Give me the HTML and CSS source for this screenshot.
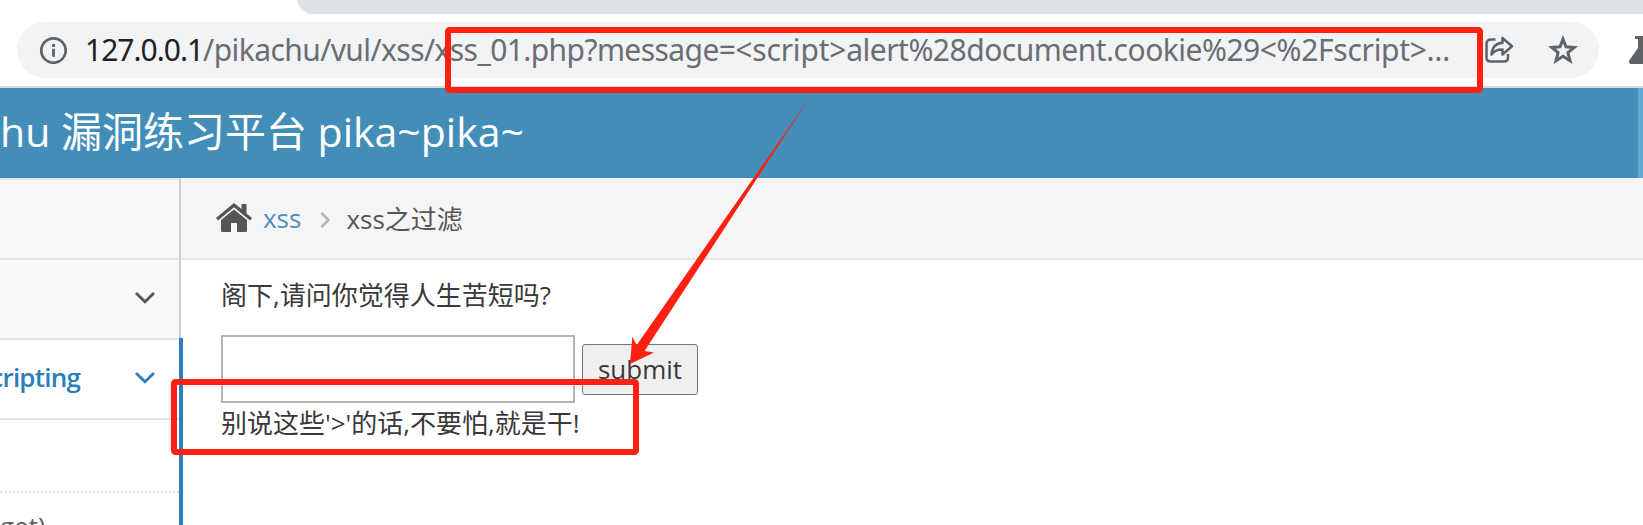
FILE: index.html
```html
<!DOCTYPE html>
<html lang="zh-CN">
<head>
<meta charset="utf-8">
<title>xss之过滤</title>
<link rel="stylesheet" href="styles.css">
</head>
<body>
<div class="window">
  <div class="tabstrip"><div class="tabstrip-bg"></div></div>
  <div class="toolbar">
    <div class="omnibox">
      <svg class="info-icon" width="28" height="28" viewBox="0 0 28 28"><circle cx="14.500" cy="14.500" r="12.200"/><path d="M14.500 12.800v7.900M14.500 8v3"/></svg>
      <div class="url"><span class="host">127.0.0.1</span><span class="path">/pikachu/vul/xss/xss_01.php?message=</span><span class="tag">&lt;script&gt;</span><span class="query">alert%28document.cookie%29</span><span class="tail">&lt;%2Fscript&gt;…</span></div>
      <svg class="share-icon" width="30" height="28" viewBox="0 0 30 28"><path d="M10.500 3.500H6.500Q1.500 3.500 1.500 8v13.500Q1.500 25.500 5.500 25.500h13.500Q23 25.500 23 21.500V18"/><path d="M17.500 2l9.500 8.200-9.500 8.300v-5Q10.500 13 6.500 18.500Q7.500 7.500 17.500 6.800z"/></svg>
      <svg class="star-icon" width="30" height="30" viewBox="0 0 30 30"><path d="M15 4.200l3 7.600 8.200.6-6.300 5.100 2.100 8.200-7-4.500-7 4.500 2.100-8.200-6.300-5.100 8.200-.6z"/></svg>
    </div>
    <svg class="flask-icon" width="14" height="28" viewBox="0 0 14 28"><path d="M6 0h8v28H3Q-1 28 .5 24L9 12V3H6z"/></svg>
  </div>
  <header class="navbar"><span class="brand">hu 漏洞练习平台 pika~pika~</span><div class="nav-edge"></div></header>
  <div class="main">
    <aside class="sidebar">
      <div class="item first"></div>
      <div class="item"><svg class="chevron" width="22" height="14" viewBox="0 0 22 14"><path d="M2 2l9 8.800L20 2"/></svg></div>
      <div class="open">
        <div class="item active"><span class="label">cripting</span><svg class="chevron" width="22" height="14" viewBox="0 0 22 14"><path d="M2 2l9 8.800L20 2"/></svg></div>
        <div class="sub"></div>
        <div class="sub sub-last"><span>get)</span></div>
      </div>
    </aside>
    <main class="content">
      <nav class="crumbs">
        <svg class="home-icon" width="36" height="30" viewBox="0 0 36 30"><path d="M18 0 25.500 6V1h5v9.500L36 15l-2 2.500L18 4.200 2 17.500 0 15z"/><path d="M18 6.500 31 17v10.500Q31 29 29.500 29H21v-9h-6v9H6.500Q5 29 5 27.500V17z"/></svg>
        <a class="crumb-link">xss</a>
        <svg class="sep" width="11" height="18" viewBox="0 0 11 18"><path d="M1.500 2l7 7-7 7"/></svg>
        <span class="crumb">xss之过滤</span>
      </nav>
      <div class="page">
        <p class="line question">阁下,请问你觉得人生苦短吗?</p>
        <div class="form"><input class="field" type="text"><button class="submit">submit</button></div>
        <p class="line answer">别说这些'&gt;'的话,不要怕,就是干!</p>
      </div>
    </main>
  </div>
  <svg class="marks" width="1643" height="525" viewBox="0 0 1643 525">
    <rect x="448" y="30" width="1032" height="60" rx="1.500"/>
    <rect x="174" y="382" width="462" height="70" rx="1.500"/>
    <path d="M809.500 98 644.500 351 654 352.500 630 364 632.300 336.700 636.700 345z"/>
  </svg>
</div>
</body>
</html>
```

FILE: styles.css
```css
* { box-sizing: border-box; }
body { margin: 0; background: #fff; font-family: "Open Sans", "Noto Sans CJK SC", sans-serif; color: #393939; }
.window { position: relative; width: 1643px; height: 525px; overflow: hidden; display: flex; flex-direction: column; }
.tabstrip { height: 14px; padding-left: 297px; flex: none; overflow: hidden; }
.tabstrip-bg { height: 18px; margin-top: -4px; background: #dee1e6; border-bottom-left-radius: 16px; }
.toolbar { height: 74px; flex: none; padding: 8px 0 8px 17px; border-bottom: 2px solid #d9dadc; display: flex; }
.omnibox { width: 1582px; height: 56px; border-radius: 28px; background: #f1f3f4; display: flex; align-items: center; padding: 0 21px 0 22px; }
.info-icon { fill: none; stroke: #5f6368; stroke-width: 2.8; flex: none; }
.url { width: 1400px; margin-left: 18px; font-family: "Noto Sans", sans-serif; font-size: 30px; line-height: 40px; white-space: nowrap; color: #6a6d71; }
.host { color: #1f2023; letter-spacing: -1px; }
.path { letter-spacing: -.58px; }
.tag { letter-spacing: -.2px; }
.query { letter-spacing: -.5px; }
.tail { letter-spacing: -.3px; }
.share-icon { fill: none; stroke: #5f6368; stroke-width: 2.5; stroke-linejoin: round; flex: none; }
.star-icon { fill: none; stroke: #5f6368; stroke-width: 3; margin-left: auto; flex: none; }
.flask-icon { margin: 14px 0 0 30px; fill: #5f6368; flex: none; }
.navbar { height: 90px; flex: none; background: #438eb9; display: flex; justify-content: space-between; }
.brand { color: #fff; font-size: 41px; line-height: 86px; white-space: nowrap; }
.nav-edge { width: 5px; background: #62a8d1; }
.main { flex: 1; display: flex; min-height: 0; }
.sidebar { width: 183px; flex: none; }
.item { width: 181px; height: 80px; border-bottom: 2px solid #e5e5e5; border-right: 2px solid #ccc; background: #f8f8f8; display: flex; align-items: center; justify-content: flex-end; padding-right: 23px; font-size: 26px; }
.item.first { height: 82px; border-top: 2px solid #e5e5e5; }
.chevron { fill: none; stroke: #555; stroke-width: 2.8; flex: none; margin-bottom: 2px; }
.open { position: relative; border-right: 4px solid #2b7dbc; height: 189px; margin-top: -2px; padding-top: 2px; }
.item.active { width: 179px; background: #fff; border-right: 0; color: #2b7dbc; font-weight: 600; padding-right: 23px; white-space: nowrap; }
.active .label { margin: 0 54px 4px 0; letter-spacing: -.8px; }
.active .chevron { stroke: #2b7dbc; margin-bottom: 3px; }
.sub { height: 73px; border-bottom: 2px dotted #ddd; font-size: 26px; color: #616161; }
.sub-last { border: 0; padding-top: 15px; height: 34px; line-height: 36px; overflow: hidden; }
.content { flex: 1; margin-left: -2px; }
.crumbs { height: 82px; background: #f5f5f5; border-bottom: 2px solid #e5e5e5; display: flex; align-items: center; padding-left: 35px; font-size: 26px; color: #555; }
.home-icon { fill: #555; }
.crumb-link { color: #4c8fbd; margin-left: 11px; }
.sep { fill: none; stroke: #b2b6bf; stroke-width: 2.6; margin: 3px 15px 0 19px; }
.page { padding: 15px 0 0 40px; }
.line { margin: 0; font-size: 26px; line-height: 40px; white-space: nowrap; }
.form { display: flex; align-items: center; gap: 7px; margin-top: 20px; }
.field { width: 354px; height: 68px; border: 2px solid #b5b5b5; background: #fff; padding: 0; }
.submit { width: 116px; height: 51px; border: 1px solid #767676; border-radius: 3px; background: #efefef; color: #393939; font: 26px/36px "Open Sans", sans-serif; padding: 0; }
.marks { position: absolute; left: 0; top: 0; pointer-events: none; fill: #ff2012; }
.marks rect { fill: none; stroke: #ff2012; stroke-width: 6; stroke-linejoin: round; }
```
